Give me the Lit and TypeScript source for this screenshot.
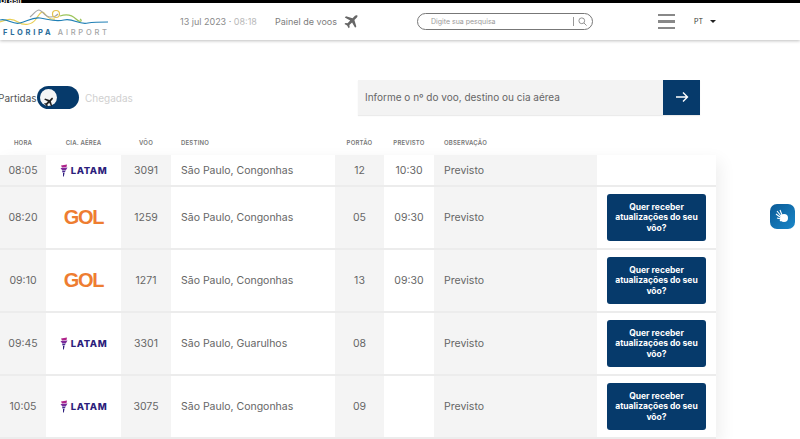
import { LitElement, css, html } from 'lit'
import { customElement } from 'lit/decorators.js'

interface Flight {
  hora: string
  cia: 'latam' | 'gol'
  voo: string
  destino: string
  portao: string
  previsto: string
  cta: boolean
}

const flights: Flight[] = [
  { hora: '08:05', cia: 'latam', voo: '3091', destino: 'São Paulo, Congonhas', portao: '12', previsto: '10:30', cta: false },
  { hora: '08:20', cia: 'gol', voo: '1259', destino: 'São Paulo, Congonhas', portao: '05', previsto: '09:30', cta: true },
  { hora: '09:10', cia: 'gol', voo: '1271', destino: 'São Paulo, Congonhas', portao: '13', previsto: '09:30', cta: true },
  { hora: '09:45', cia: 'latam', voo: '3301', destino: 'São Paulo, Guarulhos', portao: '08', previsto: '', cta: true },
  { hora: '10:05', cia: 'latam', voo: '3075', destino: 'São Paulo, Congonhas', portao: '09', previsto: '', cta: true },
]

const plane = html`<svg viewBox="0 0 24 24" width="100%" height="100%"><path fill="currentColor" d="M21.6 2.4c-1-1-2.600-.8-3.600.2l-3.700 3.700L4.500 3.400 2.700 5.200l8.100 4.600-4 4-3.100-.4-1.500 1.500 4 2.300 2.300 4 1.500-1.500-.4-3.100 4-4 4.600 8.100 1.800-1.800-2.900-9.800 3.700-3.700c1-1 1.200-2.600.6-3.500z"/></svg>`

@customElement('app-root')
export class AppRoot extends LitElement {
  static styles = css`
    :host {
      display: block;
      width: 800px;
      height: 439px;
      overflow: hidden;
      position: relative;
      background: #fff;
      font-family: Inter, 'Liberation Sans', sans-serif;
      color: #666;
    }
    .topbar {
      height: 3px;
      background: #000;
      overflow: hidden;
      color: #fff;
      font-size: 8px;
      line-height: 0;
      font-weight: 600;
    }
    .header {
      height: 37px;
      display: flex;
      align-items: center;
      background: #fff;
      box-shadow: 0 1px 3px rgba(0, 0, 0, 0.25);
    }
    .logo {
      width: 108px;
      margin-left: 0;
      height: 37px;
      flex: none;
      display: flex;
      flex-direction: column;
      overflow: hidden;
    }
    .logo svg {
      display: block;
      flex: none;
    }
    .logo-text {
      font-size: 7.5px;
      line-height: 9px;
      letter-spacing: 2.75px;
      font-weight: 700;
      color: #2b6d9a;
      margin-left: 3px;
      white-space: nowrap;
    }
    .logo-text span {
      color: #a5a5a5;
      font-weight: 500;
    }
    .date {
      margin-left: 72px;
      font-size: 9px;
      color: #8a8a8a;
      white-space: nowrap;
      width: 95px;
      flex: none;
    }
    .date span {
      color: #b9b9b9;
    }
    .painel {
      font-size: 9px;
      color: #7d7d7d;
      white-space: nowrap;
      flex: none;
    }
    .painel-icon {
      width: 16px;
      height: 16px;
      margin-left: 6px;
      color: #666;
      flex: none;
    }
    .search {
      margin-left: 58px;
      width: 176px;
      height: 17px;
      box-sizing: border-box;
      border: 1px solid #777;
      border-radius: 9px;
      display: flex;
      align-items: center;
      padding: 0 5px 0 13px;
      font-size: 7px;
      color: #999;
      flex: none;
    }
    .search .ph {
      flex: 1;
    }
    .search i {
      width: 1px;
      height: 9px;
      background: #999;
      margin-right: 4px;
    }
    .burger {
      margin-left: 65px;
      width: 17px;
      flex: none;
      display: flex;
      flex-direction: column;
      gap: 4px;
    }
    .burger i {
      height: 2.500px;
      background: #888;
    }
    .lang {
      margin-left: 19px;
      font-size: 7px;
      color: #333;
      display: flex;
      align-items: center;
      gap: 7px;
    }
    .lang i {
      width: 0;
      height: 0;
      border-left: 3px solid transparent;
      border-right: 3px solid transparent;
      border-top: 3px solid #222;
    }
    .filters {
      height: 75px;
      margin-top: 3px;
      display: flex;
      align-items: center;
      padding-top: 34px;
      box-sizing: border-box;
    }
    .filter-label {
      font-size: 10px;
      color: #555;
      margin-left: -2px;
      width: 38px;
      flex: none;
    }
    .toggle {
      width: 42px;
      height: 23px;
      border-radius: 12px;
      background: #063a6b;
      display: flex;
      align-items: center;
      padding-left: 3px;
      box-sizing: border-box;
      margin-left: 1px;
      flex: none;
    }
    .knob {
      width: 17px;
      height: 17px;
      border-radius: 50%;
      background: #f5f5f5;
      color: #222;
      padding: 3px;
      box-sizing: border-box;
    }
    .off {
      font-size: 10px;
      color: #d0d0d0;
      margin-left: 6px;
      width: 50px;
      flex: none;
    }
    .query {
      margin-left: 223px;
      width: 342px;
      height: 35px;
      display: flex;
      flex: none;
      margin-top: -1px;
      box-shadow: 0 1px 1px rgba(0, 0, 0, 0.08);
    }
    .query .input {
      flex: 1;
      background: #f3f3f3;
      font-size: 10px;
      color: #666;
      display: flex;
      align-items: center;
      padding-left: 7px;
    }
    .query .go {
      width: 37px;
      background: #063a6b;
      display: flex;
      align-items: center;
      justify-content: center;
    }
    .table {
      width: 716px;
      margin-top: 18px;
    }
    .row {
      display: grid;
      grid-template-columns: 46px 75px 50px 164px 49px 50px 163px 119px;
    }
    .head {
      height: 20px;
      align-items: center;
      font-size: 6px;
      font-weight: 600;
      color: #777;
      letter-spacing: 0.2px;
      padding-bottom: 7px;
      box-sizing: border-box;
      margin-bottom: -1px;
    }
    .head > div {
      text-align: center;
    }
    .head > .l {
      text-align: left;
      padding-left: 10px;
    }
    .body {
      box-shadow: 4px 6px 16px rgba(0, 0, 0, 0.07);
    }
    .flight {
      height: 63px;
      border-bottom: 2px solid #ececec;
      box-sizing: border-box;
      font-size: 10.500px;
      color: #666;
    }
    .flight.short {
      height: 32px;
    }
    .flight > div {
      display: flex;
      align-items: center;
      justify-content: center;
    }
    .flight > .grey {
      background: #f4f4f4;
    }
    .flight > .l {
      justify-content: flex-start;
      padding-left: 10px;
    }
    .latam {
      display: flex;
      align-items: center;
      gap: 3px;
      color: #2c1e7c;
      font-weight: 800;
      font-size: 9.500px;
      letter-spacing: 0.6px;
      font-family: Inter, sans-serif;
    }
    .gol {
      position: relative;
      display: flex;
      font-family: 'Liberation Sans', sans-serif;
      font-size: 20px;
      font-weight: 700;
      letter-spacing: -1.200px;
      color: #ee7d31;
    }
    .cta {
      width: 99px;
      height: 47px;
      background: #063a6b;
      border: none;
      border-radius: 3px;
      color: #fff;
      font-family: inherit;
      font-size: 8.500px;
      font-weight: 700;
      line-height: 10.500px;
      text-align: center;
      padding: 0 8px;
    }
    .vlibras {
      position: absolute;
      left: 770px;
      top: 204px;
      width: 25px;
      height: 25px;
      border-radius: 7px;
      background: linear-gradient(135deg, #0b5a96, #1a87c9);
      display: flex;
      align-items: center;
      justify-content: center;
    }
  `

  renderCia(cia: Flight['cia']) {
    if (cia === 'gol') return html`<div class="gol">GOL</div>`
    return html`<div class="latam">
      <svg width="8" height="13" viewBox="0 0 8 13">
        <path d="M1 1.500 7 .5 6.500 3 2 3.500z" fill="#b0238a" />
        <path d="M.5 4 7.500 3.500 6 6 2 6z" fill="#7b2a9b" />
        <path d="M2 6.500 6 6.500 4.500 8.500 2.500 8.500z" fill="#4a2a90" />
        <path d="M3 9 4.500 9 3.800 12.500 3 12.500z" fill="#2c1e7c" />
      </svg>
      LATAM
    </div>`
  }

  renderFlight(f: Flight) {
    return html`<div class="row flight ${f.cta ? '' : 'short'}">
      <div class="grey">${f.hora}</div>
      <div>${this.renderCia(f.cia)}</div>
      <div class="grey">${f.voo}</div>
      <div class="l">${f.destino}</div>
      <div class="grey">${f.portao}</div>
      <div>${f.previsto}</div>
      <div class="grey l">Previsto</div>
      <div>${f.cta ? html`<button class="cta">Quer receber atualizações do seu vôo?</button>` : ''}</div>
    </div>`
  }

  render() {
    return html`
      <div class="topbar">Brasil</div>
      <header class="header">
        <div class="logo">
          <svg width="108" height="25" viewBox="0 0 108 25" fill="none">
            <path d="M0 19c8-3 12-4 18 0s14 3 18-3 6-9 9-5 6 6 10 5" stroke="#e9cf55" stroke-width="1.200" />
            <path d="M30 14c4-3 6-7 9-7s6 7 11 7 6-1 8-3" stroke="#a5a5a5" stroke-width="1.200" />
            <circle cx="56" cy="11" r="3.500" stroke="#e5c24a" stroke-width="1.200" />
            <path d="M60 13c6-2 12-1 16 3s7 2 4 0" stroke="#9cc45a" stroke-width="1.200" />
            <path d="M0 17c8-2 12 5 20 3s12-6 20-5 14 4 24 2 14 5 24 3c6-1 12-1 20-1" stroke="#1f7fb5" stroke-width="1.200" />
          </svg>
          <div class="logo-text">FLORIPA <span>AIRPORT</span></div>
        </div>
        <div class="date">13 jul 2023 · <span>08:18</span></div>
        <div class="painel">Painel de voos</div>
        <div class="painel-icon">${plane}</div>
        <div class="search">
          <div class="ph">Digite sua pesquisa</div>
          <i></i>
          <svg width="9" height="9" viewBox="0 0 10 10" fill="none" stroke="#888" stroke-width="1">
            <circle cx="4.200" cy="4.200" r="3.200" /><path d="M6.600 6.600 9.500 9.500" />
          </svg>
        </div>
        <div class="burger"><i></i><i></i><i></i></div>
        <div class="lang">PT <i></i></div>
      </header>
      <section class="filters">
        <div class="filter-label">Partidas</div>
        <div class="toggle"><div class="knob">${plane}</div></div>
        <div class="off">Chegadas</div>
        <div class="query">
          <div class="input">Informe o nº do voo, destino ou cia aérea</div>
          <div class="go">
            <svg width="14" height="12" viewBox="0 0 14 12" fill="none" stroke="#fff" stroke-width="1.400">
              <path d="M1 6h11.500M8 1.500 12.500 6 8 10.500" />
            </svg>
          </div>
        </div>
      </section>
      <section class="table">
        <div class="row head">
          <div>HORA</div><div>CIA. AÉREA</div><div>VÔO</div><div class="l">DESTINO</div>
          <div>PORTÃO</div><div>PREVISTO</div><div class="l">OBSERVAÇÃO</div><div></div>
        </div>
        <div class="body">${flights.map(f => this.renderFlight(f))}</div>
      </section>
      <div class="vlibras">
        <svg width="15" height="15" viewBox="0 0 15 15" fill="#fff">
          <circle cx="9" cy="9" r="4" />
          <path d="M2 2l4 5M5 1l2 5M1 5l4 3M2 9l4 1M5 12l2-2" stroke="#fff" stroke-width="1.100" />
        </svg>
      </div>
    `
  }
}
